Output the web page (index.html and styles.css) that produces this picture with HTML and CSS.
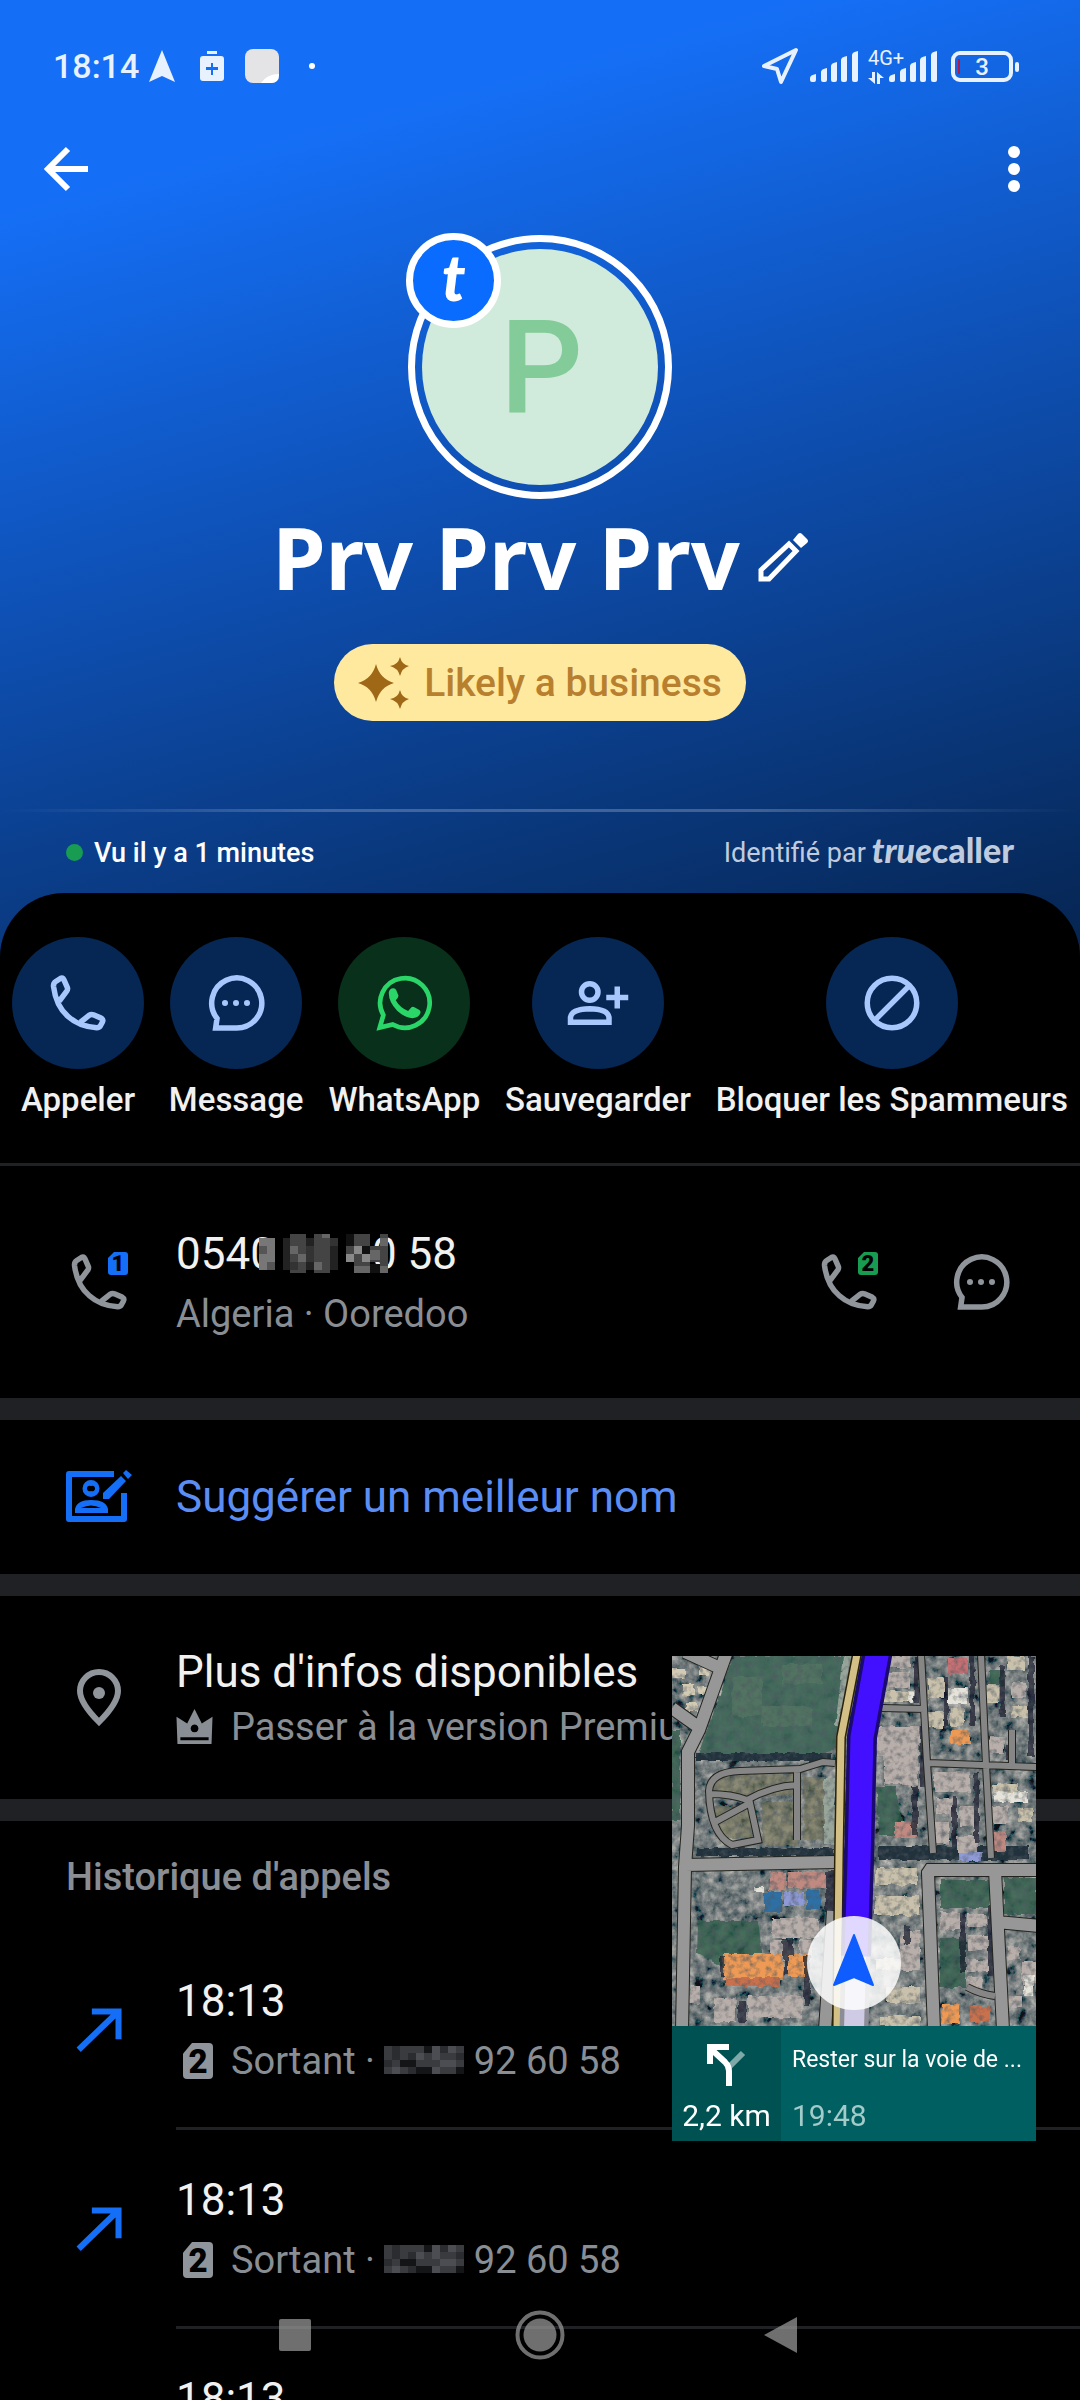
FILE: index.html
```html
<!DOCTYPE html>
<html lang="fr">
<head>
  <meta charset="UTF-8">
  <meta name="viewport" content="width=device-width, initial-scale=1">
  <title>Prv Prv Prv</title>
  <link rel="stylesheet" href="styles.css">
</head>
<body>
  <!-- shared icons -->
  <svg class="sprite" aria-hidden="true">
    <symbol id="i-phone" viewBox="0 0 24 24">
      <path fill="none" stroke="currentColor" stroke-width="2" stroke-linejoin="round" d="M5.2 11.3L7.9 7.7Q8.4 7 8.1 6.3L6.9 3.6Q6.5 2.6 5.6 3.1L3.9 4.2Q3 4.8 3.1 6Q4 13.2 8.5 17Q12.5 20.6 18.8 21Q19.8 21 20.2 20.2L20.9 18.9Q21.3 18 20.4 17.5L17.6 16.3Q16.8 16 16 16.5L12.9 19"/>
    </symbol>
    <symbol id="i-chat" viewBox="0 0 24 24">
      <path fill="none" stroke="currentColor" stroke-width="2" d="M12.1 21.1H4.6L5.1 17.6A9.1 9.1 0 1 1 12.1 21.1Z"/>
      <g fill="currentColor"><circle cx="8" cy="12" r="1.1"/><circle cx="12" cy="12" r="1.1"/><circle cx="16" cy="12" r="1.1"/></g>
    </symbol>
    <symbol id="i-out" viewBox="0 0 24 24">
      <path fill="none" stroke="currentColor" stroke-width="2.2" d="M4.6 18.8L19 4.9M9.4 4.9H19.1V15"/>
    </symbol>
    <symbol id="i-bars" viewBox="0 0 48 31">
      <path fill="currentColor" d="M0 27q0-3 6-4v6q0 2-2 2H2q-2 0-2-2zM11 21q0-3 6-4v12q0 2-2 2h-2q-2 0-2-2zM21 15q0-3 6-4v18q0 2-2 2h-2q-2 0-2-2zM31 9q0-3 6-4v24q0 2-2 2h-2q-2 0-2-2zM42 4q0-3 6-4v29q0 2-2 2h-2q-2 0-2-2z"/>
    </symbol>
    <symbol id="i-mosaic" viewBox="0 0 10 4" preserveAspectRatio="none">
      <path fill="#3a3b3f" d="M0 0h10v4h-10z"/>
      <path fill="#2b2c2f" d="M1 0h1v2h-1zM3 1h1v1h-1zM0 2h1v1h-1zM5 3h1v1h-1zM7 0h1v1h-1zM9 1h1v1h-1zM3 3h1v1h-1z"/>
      <path fill="#141517" d="M5 0h1v1h-1zM2 2h2v1h-2zM4 3h2v1h-2zM9 3h1v1h-1z"/>
      <path fill="#4b4d52" d="M6 0h1v2h-1zM8 0h1v1h-1zM4 1h1v1h-1zM7 2h2v1h-2zM6 3h1v1h-1zM1 3h1v1h-1z"/>
    </symbol>
  </svg>

  <div class="app">
    <header class="hero">
      <div class="status">
        <span class="clock">18:14</span>
        <svg class="st-nav" viewBox="0 0 26 32"><path fill="currentColor" d="M13 0L26 32L13 26L0 32Z"/></svg>
        <svg class="st-clean" viewBox="0 0 24 32"><path fill="currentColor" fill-rule="evenodd" d="M7 1h10v3H7zM3 6h18q3 0 3 3v19q0 3-3 3H3q-3 0-3-3V9q0-3 3-3zM11 13v4H6v3h5v5h2v-5h5v-3h-5v-4z"/></svg>
        <svg class="st-note" viewBox="0 0 34 34"><rect width="34" height="34" rx="8" fill="#e4e4e6"/><path fill="#fff" d="M16 34q6-9 18-9v1q0 8-8 8z"/></svg>
        <span class="st-dot"></span>
        <div class="status-right">
          <svg class="st-loc" viewBox="0 0 38 38"><path fill="none" stroke="currentColor" stroke-width="4" stroke-linejoin="round" d="M35 3L3 19L16 22L20 35Z"/></svg>
          <svg class="st-bars"><use href="#i-bars"/></svg>
          <span class="net">
            <span class="net-label">4G+</span>
            <svg class="net-arrows" viewBox="0 0 16 12"><path fill="currentColor" d="M4 0h3v12L0 6h4zM9 12h3V6h4L9 0z"/></svg>
          </span>
          <svg class="st-bars"><use href="#i-bars"/></svg>
          <span class="battery">3</span>
        </div>
      </div>

      <div class="toolbar">
        <button class="icon-btn" aria-label="Retour">
          <svg viewBox="0 0 44 44"><path fill="none" stroke="currentColor" stroke-width="6" d="M44 22H5M24 2L4 22L24 42"/></svg>
        </button>
        <button class="icon-btn" aria-label="Plus d'options">
          <svg viewBox="0 0 44 44"><g fill="currentColor"><circle cx="22" cy="5" r="6"/><circle cx="22" cy="22" r="6"/><circle cx="22" cy="39" r="6"/></g></svg>
        </button>
      </div>

      <div class="avatar">
        <div class="avatar-face">P</div>
        <span class="avatar-badge">t</span>
      </div>

      <div class="name-row">
        <h1>Prv Prv Prv</h1>
        <button class="edit-btn" aria-label="Modifier le nom">
          <svg viewBox="0 0 50 50"><path fill="none" stroke="currentColor" stroke-width="5" d="M3 38L31 12L38 19L11 47H3Z"/><path fill="currentColor" d="M35 8L40 2Q42 0 44 2L49 7Q51 9 49 11L43 16Z"/></svg>
        </button>
      </div>

      <div class="tag">
        <svg viewBox="0 0 52 52"><path fill="currentColor" d="M18 7Q22 22 36 26Q22 30 18 45Q14 30 0 26Q14 22 18 7ZM42 0Q44 8 51 9Q44 11 42 19Q40 11 32 9Q40 8 42 0ZM42 33Q44 41 51 42Q44 44 42 52Q40 44 32 42Q40 41 42 33Z"/></svg>
        <span>Likely a business</span>
      </div>

      <div class="hero-foot">
        <span class="seen">Vu il y a 1 minutes</span>
        <span class="by">Identifié par <span class="brand"><i>true</i>caller</span></span>
      </div>
    </header>

    <main class="sheet">
      <nav class="actions">
        <button class="action">
          <span class="bubble"><svg><use href="#i-phone"/></svg></span>
          Appeler
        </button>
        <button class="action">
          <span class="bubble"><svg><use href="#i-chat"/></svg></span>
          Message
        </button>
        <button class="action whatsapp">
          <span class="bubble">
            <svg viewBox="0 0 24 24">
              <path fill="none" stroke="currentColor" stroke-width="1.7" d="M3.2 20.9L4.5 16.4A9 9 0 1 1 7.9 19.8Z"/>
              <path fill="currentColor" d="M6.5 8Q6.8 6.5 8.2 6.6Q8.9 6.6 9.2 7.4L10 9.4Q10 10 9 11Q10.5 13.7 13.5 14.9L14.7 13.5Q15.2 13.2 15.8 13.5L17.6 14.5Q18.2 14.9 17.9 15.8Q17.2 17.5 15 17.5Q12.3 17.3 9.5 14.8Q6.2 11.4 6.5 8Z"/>
            </svg>
          </span>
          WhatsApp
        </button>
        <button class="action">
          <span class="bubble">
            <svg viewBox="0 0 24 24">
              <g fill="none" stroke="currentColor" stroke-width="2"><circle cx="9" cy="8" r="3"/><path d="M2 19V17.2Q2.5 14.2 9 14.1Q15.5 14.2 16 17.2V19ZM15 10H23M19 6V14"/></g>
            </svg>
          </span>
          Sauvegarder
        </button>
        <button class="action">
          <span class="bubble">
            <svg viewBox="0 0 24 24"><g fill="none" stroke="currentColor" stroke-width="2"><circle cx="12" cy="12" r="9"/><path d="M5.7 18.3L18.3 5.7"/></g></svg>
          </span>
          Bloquer les Spammeurs
        </button>
      </nav>

      <section class="row number-row">
        <span class="phone-sim">
          <svg class="row-icon"><use href="#i-phone"/></svg>
          <span class="sim sim-1">1</span>
        </span>
        <div class="row-text">
          <div class="title">0540<svg class="mask" viewBox="0 0 129 39">
              <path fill="#777" d="M0 4h16v32h-16z"/><path fill="#555" d="M0 12h8v8h-8zM8 28h8v8h-8z"/>
              <path fill="#000" d="M16 0h71v39h-71z"/>
              <path fill="#222" d="M24 4h55v32h-55z"/>
              <path fill="#444" d="M31 0h16v39h-16zM55 0h16v39h-16z"/>
              <path fill="#666" d="M31 12h8v8h-8zM39 20h8v8h-8zM63 0h8v4h-8zM55 28h8v8h-8z"/>
              <path fill="#333" d="M47 12h8v16h-8zM71 4h8v8h-8zM31 28h8v8h-8z"/>
              <path fill="#444" d="M87 12h42v16h-42zM95 0h16v39h-16zM121 0h8v39h-8z"/>
              <path fill="#888" d="M95 12h8v8h-8zM103 20h8v8h-8zM87 20h8v8h-8z"/>
              <path fill="#666" d="M95 32h16v7h-16zM111 16h10v10h-10zM121 4h8v8h-8zM121 32h8v7h-8z"/>
              <path fill="#111" d="M87 0h8v12h-8zM103 12h8v8h-8zM111 30h10v9h-10z"/>
            </svg>0 58</div>
          <div class="sub">Algeria · Ooredoo</div>
        </div>
        <div class="row-actions">
          <button class="phone-sim" aria-label="Appeler avec la SIM 2">
            <svg class="row-icon"><use href="#i-phone"/></svg>
            <span class="sim sim-2">2</span>
          </button>
          <button aria-label="Envoyer un message"><svg class="row-icon"><use href="#i-chat"/></svg></button>
        </div>
      </section>

      <a class="row suggest-row" href="#">
        <svg class="row-icon" viewBox="0 0 66 66">
          <path fill="none" stroke="currentColor" stroke-width="6" stroke-linejoin="round" d="M48 10H3V55H58V29"/>
          <g fill="currentColor">
            <path fill-rule="evenodd" d="M25 16a8.5 8.5 0 1 1 0 17a8.5 8.5 0 1 1 0-17zM25 22a2.8 2.8 0 1 0 0 5a2.8 2.8 0 1 0 0-5z"/>
            <path fill-rule="evenodd" d="M9 49V45Q11 36 25 36Q40 36 42 45V49ZM15 44H35Q25 39 15 44Z"/>
            <path d="M37 29L55 12L60 17L43 35H37ZM57 9L60 6L66 11L62 15Z"/>
          </g>
        </svg>
        <div class="row-text"><div class="title">Suggérer un meilleur nom</div></div>
      </a>

      <section class="row info-row">
        <svg class="row-icon" viewBox="0 0 66 66">
          <path fill="none" stroke="currentColor" stroke-width="6" d="M33 57Q14 38 14 26A19 19 0 0 1 52 26Q52 38 33 57Z"/>
          <circle cx="33" cy="28" r="6" fill="currentColor"/>
        </svg>
        <div class="row-text">
          <div class="title">Plus d'infos disponibles</div>
          <div class="sub">
            <svg class="crown" viewBox="0 0 37 38"><path fill="currentColor" fill-rule="evenodd" d="M0 9L11 16L18.5 1L26 16L37 9L36 37H1ZM18.5 17a4 4 0 1 0 .1 0zM4 30V33H33V30Z"/></svg>
            <span>Passer à la version Premium</span>
          </div>
        </div>
      </section>

      <section class="history">
        <h2>Historique d'appels</h2>
        <div class="call">
          <svg class="row-icon"><use href="#i-out"/></svg>
          <div class="call-text">
            <div class="title">18:13</div>
            <div class="sub"><span class="call-sim">2</span><span>Sortant · <svg class="call-mask"><use href="#i-mosaic"/></svg> 92 60 58</span></div>
          </div>
        </div>
        <div class="call">
          <svg class="row-icon"><use href="#i-out"/></svg>
          <div class="call-text">
            <div class="title">18:13</div>
            <div class="sub"><span class="call-sim">2</span><span>Sortant · <svg class="call-mask"><use href="#i-mosaic"/></svg> 92 60 58</span></div>
          </div>
        </div>
        <div class="call call-next">
          <div class="call-text">
            <div class="title">18:13</div>
          </div>
        </div>
      </section>
    </main>

    <!-- floating navigation window -->
    <aside class="pip">
      <svg class="map" viewBox="0 0 364 370" preserveAspectRatio="xMidYMid slice">
        <defs>
          <filter id="ground" x="0" y="0" width="100%" height="100%">
            <feTurbulence type="fractalNoise" baseFrequency="0.09" numOctaves="4" seed="4"/>
            <feColorMatrix values="1.6 0 0 0 -0.45  1.4 0 0 0 -0.32  1.2 0 0 0 -0.25  0 0 0 0 1"/>
          </filter>
          <filter id="rough" x="0" y="0" width="100%" height="100%">
            <feTurbulence type="fractalNoise" baseFrequency="0.12" numOctaves="2" seed="9"/>
            <feDisplacementMap in="SourceGraphic" scale="5" xChannelSelector="R" yChannelSelector="G"/>
          </filter>
          <filter id="grain" x="0" y="0" width="100%" height="100%">
            <feTurbulence type="fractalNoise" baseFrequency="0.16" numOctaves="3" seed="2"/>
            <feColorMatrix values="0 0 0 0 0.08  0 0 0 0 0.1  0 0 0 0 0.12  2.2 0 0 0 -0.95"/>
          </filter>
        </defs>
        <rect width="364" height="370" filter="url(#ground)"/>
        <rect width="364" height="370" fill="#2c3442" opacity=".3"/>
        <g filter="url(#rough)">
          <path fill="#3d6656" opacity=".9" d="M62 0H176L164 92L150 98H26L36 72Z"/>
          <path fill="#5f7c68" opacity=".5" d="M60 20h30v40h-30zM90 50h50v20h-50zM110 8h40v20h-40z"/>
          <path fill="#23313c" d="M24 97h136v8h-136zM24 192h138v8h-138zM206 190h150v14h-150z"/>
          <path fill="#2f5e4b" opacity=".8" d="M26 265h60l5 40l-30 12l-36-20zM205 130h18l10 50h-26zM268 224h50v28h-50zM332 222h32v36h-32zM268 282h26v50h-26zM0 74h8v90h-8zM318 14h14v16h-14z"/>
          <path fill="#7d7a58" opacity=".6" d="M42 118h80v22h-80zM44 150h36v32h-36zM90 145h36v44h-36zM132 120h20v64h-20z"/>
          <path fill="#98a59b" d="M152 122h11v66h-11zM172 0h8l-14 70h-3z"/>
          <path fill="#d3cab4" d="M0 12h14v10h-14zM10 28h12v12h-12zM26 8h12v12h-12zM14 46h12v10h-12zM26 30h10v8h-10z"/>
          <path fill="#c9c1ab" d="M211 35h30v11h-30zM204 212h42v17h-42zM203 240h44v19h-44zM204 302h28v12h-28zM214 331h34v16h-34zM208 360h40v10h-40zM256 22h16v20h-16zM278 52h14v18h-14zM256 56h16v16h-16zM313 28h14v18h-14zM336 0h16v14h-16zM340 50h16v12h-16zM320 128h26v10h-26zM346 152h14v14h-14z"/>
          <path fill="#b9afaa" d="M212 0h26v12h-26zM216 16h22v16h-22zM205 70h42v30h-42zM212 100h34v28h-34zM262 116h36v20h-36zM264 142h16v16h-16zM288 150h14v20h-14zM263 166h14v22h-14zM285 180h20v16h-20zM318 80h14v18h-14zM340 26h14v16h-14zM320 150h16v18h-16zM268 256h22v18h-22zM296 258h18v12h-18zM296 280h20v14h-20zM296 304h20v12h-20zM228 275h20v40h-20zM296 320h14v12h-14zM336 290h12v14h-12zM350 306h14v22h-14zM336 340h14v12h-14zM100 262h46v20h-46zM98 284h18v20h-18zM126 284h14v20h-14zM42 342h22v24h-22zM76 340h54v22h-54zM18 330h10v18h-10z"/>
          <path fill="#e6e3da" d="M276 32h20v16h-20zM322 136h34v10h-34zM352 320h10v20h-10zM82 231h10v5h-10zM236 36h5v10h-5z"/>
          <path fill="#c56f73" d="M276 2h20v16h-20z"/>
          <path fill="#c08a80" d="M223 166h22v16h-22zM98 216h16v18h-16zM320 176h14v20h-14zM116 216h38v16h-38z"/>
          <path fill="#ee9a55" d="M51 298h60v26h-60zM116 298h20v22h-20zM278 74h20v14h-20zM270 348h18v20h-18z"/>
          <path fill="#c9714d" d="M54 322h54v8h-54zM298 350h20v16h-20z"/>
          <path fill="#2f6fa5" d="M92 236h18v20h-18zM134 234h14v20h-14z"/>
          <path fill="#8f9ad6" d="M286 196h24v9h-24zM112 236h20v14h-20z"/>
          <path fill="#181c2c" opacity=".75" d="M242 0h5v46h-5zM248 70h5v60h-5zM272 20h4v50h-4zM298 0h5v70h-5zM302 116h5v70h-5zM334 90h5v14h-5zM328 10h5v50h-5zM356 0h6v100h-6zM280 140h5v50h-5zM112 300h4v18h-4zM110 284h12v16h-12zM66 344h8v22h-8zM132 300h6v50h-6zM48 300h4v20h-4zM154 215h8v40h-8zM232 270h6v18h-6zM240 130h6v50h-6zM316 250h5v70h-5zM288 256h6v60h-6z"/>
        </g>
        <rect width="364" height="370" filter="url(#grain)" opacity=".7"/>
        <!-- roads: dark casing then surface -->
        <g fill="none" stroke="#23241f">
          <path stroke-width="14" d="M13-4L48 12M0 52L25 70M54-2L27 74L16 96V170L13 211L10 374M13 209L164 206M161 255L153 374M374 214H258L256 217L262 374M323 214L331 374M325 266L368 270"/>
          <path stroke-width="8" d="M249-2L255 107L261 197M309-2L314 109L319 202M210 52L253 53M256 107L366 111M340 74V110M295 331Q308 338 323 340M163 107L151 106L128 113L68 115Q38 116 37 135Q38 178 60 189L86 184L78 147L43 166M125 113V184M37 138Q60 138 75 144Q100 130 125 129"/>
        </g>
        <g fill="none" stroke="#979797">
          <path stroke-width="12" d="M13-4L48 12M0 52L25 70M54-2L27 74L16 96V170L13 211L10 374M13 209L164 206M161 255L153 374M374 214H258L256 217L262 374M323 214L331 374M325 266L368 270"/>
          <path stroke-width="6" stroke="#868686" d="M249-2L255 107L261 197M309-2L314 109L319 202M210 52L253 53M256 107L366 111M340 74V110M295 331Q308 338 323 340M163 107L151 106L128 113L68 115Q38 116 37 135Q38 178 60 189L86 184L78 147L43 166M125 113V184M37 138Q60 138 75 144Q100 130 125 129"/>
        </g>
        <g fill="none" stroke-linejoin="round">
          <path stroke="#2b2208" stroke-width="10" d="M185-2L169 81L167 201L165 374"/>
          <path stroke="#d3c087" stroke-width="7" d="M185-2L169 81L167 201L165 374"/>
          <path stroke="#8d8d96" stroke-width="29" d="M184 300L182 374"/>
          <path stroke="#cfcbe4" stroke-width="20" d="M184 300L182 374"/>
          <path stroke="#1b0a70" stroke-width="30" d="M206-6L190 81L187 205L184 300"/>
          <path stroke="#4310ff" stroke-width="23" d="M206-6L190 81L187 205L184 300"/>
        </g>
        <circle cx="182" cy="307" r="47" fill="#fff" opacity=".84"/>
        <path fill="#0f5cff" stroke="#0f5cff" stroke-width="2" stroke-linejoin="round" d="M182 279L201 329L182 321L162 329Z"/>
      </svg>
      <div class="pip-bar">
        <div class="pip-turn">
          <svg viewBox="0 0 40 42"><path fill="none" stroke="#7ea9a8" stroke-width="6" d="M22 23L36 9"/><path fill="none" stroke="#fff" stroke-width="6" d="M22 42V27Q22 22 18 18L5 6"/><path fill="#fff" d="M0 0H22V6H6V20H0Z"/></svg>
          <span>2,2 km</span>
        </div>
        <div class="pip-text">
          <span class="pip-step">Rester sur la voie de ...</span>
          <span class="pip-eta">19:48</span>
        </div>
      </div>
    </aside>

    <footer class="navbar">
      <button aria-label="Applications récentes"><svg viewBox="0 0 50 50"><rect x="9" y="9" width="32" height="32" rx="2" fill="currentColor"/></svg></button>
      <button aria-label="Accueil"><svg viewBox="0 0 50 50"><circle cx="25" cy="25" r="22.5" fill="none" stroke="currentColor" stroke-width="4"/><circle cx="25" cy="25" r="16.5" fill="currentColor"/></svg></button>
      <button aria-label="Retour système"><svg viewBox="0 0 50 50"><path fill="currentColor" d="M4 25L37 7V43Z"/></svg></button>
    </footer>
  </div>
</body>
</html>
```
FILE: styles.css
```css
* {
  box-sizing: border-box;
}

body {
  margin: 0;
  background: #000;
  color: #f1f1f1;
  font-family: Roboto, "Liberation Sans", sans-serif;
}

svg {
  display: block;
  flex-shrink: 0;
}

button {
  padding: 0;
  border: none;
  background: none;
  color: inherit;
  font: inherit;
}

.sprite {
  position: absolute;
  width: 0;
  height: 0;
}

.app {
  position: relative;
  height: 100vh;
  overflow: hidden;
}

/* header */
.hero {
  display: flex;
  flex-direction: column;
  align-items: center;
  padding-bottom: 64px;
  color: #fff;
  background: linear-gradient(165deg, #156ff6 17%, #0e50b4 50%, #06244f 100%);
}

.status {
  display: flex;
  align-items: center;
  align-self: stretch;
  height: 132px;
  padding: 0 61px 0 53px;
  color: #e8f1fe;
}

.clock {
  font-size: 34px;
  font-weight: 500;
}

.st-nav {
  width: 26px;
  height: 32px;
  margin-left: 10px;
}

.st-clean {
  width: 24px;
  height: 32px;
  margin-left: 25px;
}

.st-note {
  width: 34px;
  height: 34px;
  margin-left: 21px;
}

.st-dot {
  width: 6px;
  height: 6px;
  margin-left: 30px;
  border-radius: 50%;
  background: #fff;
}

.status-right {
  display: flex;
  align-items: center;
  margin-left: auto;
}

.st-loc {
  width: 38px;
  height: 38px;
  margin-right: 11px;
}

.st-bars {
  width: 48px;
  height: 31px;
}

.net {
  display: flex;
  flex-direction: column;
  width: 31px;
  padding-left: 10px;
  gap: 4px;
}

.net-label {
  font-size: 20px;
  line-height: 20px;
}

.net-arrows {
  width: 16px;
  height: 12px;
}

.battery {
  position: relative;
  width: 62px;
  height: 31px;
  margin-left: 14px;
  margin-right: 6px;
  border: 4px solid;
  border-radius: 9px;
  font-size: 24px;
  font-weight: 500;
  line-height: 24px;
  text-align: center;
}

.battery::before,
.battery::after {
  content: "";
  position: absolute;
}

.battery::before {
  left: 3px;
  top: 4px;
  width: 2px;
  height: 15px;
  background: #b3184a;
}

.battery::after {
  right: -10px;
  top: 7px;
  width: 4px;
  height: 10px;
  border-radius: 2px;
  background: currentColor;
}

.toolbar {
  display: flex;
  justify-content: space-between;
  align-self: stretch;
  height: 74px;
  padding: 0 44px;
}

.icon-btn svg {
  width: 44px;
  height: 44px;
  overflow: visible;
}

.avatar {
  position: relative;
  width: 264px;
  height: 264px;
  margin-top: 29px;
  padding: 7px;
  border: 7px solid #fff;
  border-radius: 50%;
}

.avatar-face {
  height: 100%;
  padding-left: 3px;
  border-radius: 50%;
  background: #d0ebdc;
  color: #83cb98;
  font-size: 130px;
  font-weight: 500;
  line-height: 238px;
  text-align: center;
}

.avatar-badge {
  position: absolute;
  left: -9px;
  top: -9px;
  width: 95px;
  height: 95px;
  border: 7px solid #fff;
  border-radius: 50%;
  background: #0a6cff;
  font-family: Lato, sans-serif;
  font-size: 64px;
  font-style: italic;
  font-weight: 900;
  line-height: 74px;
  text-align: center;
}

.name-row {
  display: flex;
  align-items: center;
  gap: 18px;
  margin-top: 10px;
}

h1 {
  margin: 0;
  font-family: "Noto Sans", "Open Sans", sans-serif;
  font-size: 86px;
  font-weight: 700;
  line-height: 96px;
}

.edit-btn svg {
  width: 50px;
  height: 50px;
}

.tag {
  display: flex;
  align-items: center;
  gap: 14px;
  height: 77px;
  margin-top: 39px;
  padding: 0 24px;
  border-radius: 39px;
  background: #ffe99f;
  color: #9e6817;
  font-size: 39px;
  font-weight: 500;
}

.tag svg {
  width: 52px;
  height: 52px;
}

.tag span {
  color: #b8802e;
}

.hero-foot {
  display: flex;
  align-items: center;
  justify-content: space-between;
  align-self: stretch;
  height: 84px;
  margin-top: 88px;
  padding: 3px 66px 0;
  background: linear-gradient(to right, transparent, rgba(255,255,255,0.22) 30%, rgba(255,255,255,0.22) 70%, transparent) top / 100% 3px no-repeat;
  font-size: 27px;
}

.seen {
  display: flex;
  align-items: center;
  gap: 11px;
  font-weight: 500;
}

.seen::before {
  content: "";
  width: 17px;
  height: 17px;
  border-radius: 50%;
  background: #179c52;
}

.by {
  display: flex;
  align-items: center;
  gap: 6px;
  color: #c0cbdd;
}

.brand {
  padding-bottom: 6px;
  font-family: Lato, sans-serif;
  font-size: 34px;
  font-weight: 900;
}

/* content sheet */
.sheet {
  position: relative;
  margin-top: -64px;
  border-radius: 64px 64px 0 0;
  background: #000;
}

.actions {
  display: flex;
  justify-content: space-between;
  padding: 44px 12px 43px;
  border-bottom: 3px solid #202124;
}

.action {
  display: flex;
  flex-direction: column;
  align-items: center;
  gap: 11px;
  min-width: 132px;
  font-size: 33px;
  font-weight: 500;
  line-height: 40px;
  white-space: nowrap;
}

.bubble {
  display: flex;
  align-items: center;
  justify-content: center;
  width: 132px;
  height: 132px;
  border-radius: 50%;
  background: #062653;
  color: #a8c7fc;
}

.bubble svg {
  width: 66px;
  height: 66px;
}

.whatsapp .bubble {
  background: #08301a;
  color: #2bd669;
}

.row {
  display: flex;
  align-items: center;
  gap: 44px;
  padding-left: 66px;
  border-bottom: 22px solid #202124;
  color: #8f959b;
}

.row-icon {
  width: 66px;
  height: 66px;
}

.title {
  color: #f1f1f1;
  font-size: 44px;
  line-height: 52px;
}

.sub {
  display: flex;
  align-items: center;
  gap: 18px;
  color: #898e94;
  font-size: 38px;
  line-height: 46px;
  white-space: nowrap;
}

.crown {
  width: 37px;
  height: 37px;
}

.number-row {
  min-height: 254px;
  padding-right: 66px;
}

.number-row .title {
  margin-bottom: 11px;
}

.mask {
  position: relative;
  display: inline-block;
  width: 129px;
  height: 39px;
  margin: 0 -16px;
  vertical-align: -4px;
}

.phone-sim {
  position: relative;
}

.sim {
  position: absolute;
  right: 4px;
  top: 3px;
  width: 20px;
  height: 23px;
  border-radius: 3px;
  background: #156ff6;
  clip-path: polygon(30% 0, 100% 0, 100% 100%, 0 100%, 0 26%);
  color: #000;
  font-size: 22px;
  font-weight: 900;
  line-height: 24px;
  text-align: center;
}

.sim-2 {
  background: #179c52;
}

.row-actions {
  display: flex;
  gap: 66px;
  margin-left: auto;
}

.suggest-row {
  min-height: 176px;
  color: #156ff6;
  text-decoration: none;
}

.suggest-row .title {
  color: #5b8ef5;
}

.info-row {
  min-height: 225px;
}

.info-row .title {
  margin-bottom: 6px;
}

.history h2 {
  margin: 0;
  padding: 33px 66px 31px;
  color: #898e94;
  font-size: 38px;
  font-weight: 500;
  line-height: 46px;
}

.call {
  display: flex;
  align-items: center;
  gap: 44px;
  padding-left: 66px;
}

.call .row-icon {
  color: #156ff6;
}

.call-next {
  padding-left: 176px;
}

.call-text {
  flex: 1;
  padding: 44px 0 43px;
  border-bottom: 3px solid #202124;
}

.call .title {
  margin-bottom: 11px;
}

.call-sim {
  width: 30px;
  height: 36px;
  margin-left: 7px;
  border-radius: 4px;
  background: #8f959b;
  clip-path: polygon(30% 0, 100% 0, 100% 100%, 0 100%, 0 30%);
  color: #000;
  font-size: 33px;
  font-weight: 900;
  line-height: 37px;
  text-align: center;
}

.call-mask {
  display: inline-block;
  width: 80px;
  height: 28px;
}

/* floating map */
.pip {
  position: absolute;
  right: 44px;
  bottom: 259px;
  width: 364px;
  color: #fff;
}

.map {
  width: 100%;
  height: 370px;
}

.pip-bar {
  display: flex;
  height: 115px;
  background: #005f60;
}

.pip-turn,
.pip-text {
  display: flex;
  flex-direction: column;
  justify-content: space-between;
  padding: 18px 11px 7px;
}

.pip-turn {
  align-items: center;
  width: 109px;
  background: #005152;
  font-size: 30px;
  line-height: 36px;
  white-space: nowrap;
}

.pip-turn svg {
  width: 40px;
  height: 42px;
}

.pip-step {
  font-size: 23px;
  line-height: 32px;
  white-space: nowrap;
}

.pip-eta {
  color: #a3cbc9;
  font-size: 30px;
  line-height: 36px;
}

/* system buttons */
.navbar {
  position: absolute;
  left: 0;
  right: 0;
  bottom: 0;
  display: flex;
  align-items: center;
  justify-content: center;
  gap: 195px;
  height: 130px;
  color: rgba(158,158,158,0.7);
}

.navbar svg {
  width: 50px;
  height: 50px;
}
```
